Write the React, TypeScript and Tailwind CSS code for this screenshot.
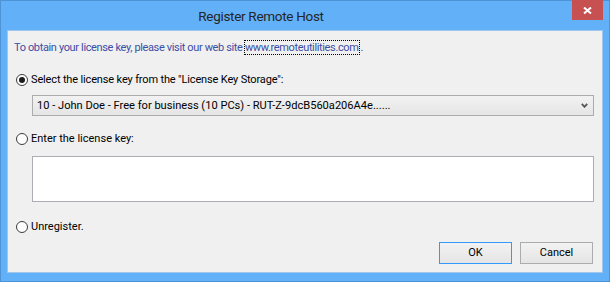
export default function App() {
  return (
    <div className="w-[610px] h-[282px] bg-[#62b0f8] border border-[#4f93d6] flex flex-col" style={{ fontFamily: 'Roboto, "Noto Sans", sans-serif' }}>
      {/* Title bar */}
      <div className="h-[29px] relative shrink-0">
        <div className="pt-[7px] pr-[88px] text-center text-[13.5px] leading-[16px] tracking-[-0.3px] text-[#262626]">Register Remote Host</div>
        <button className="absolute right-[6px] top-[-1px] w-[31px] h-[20px] bg-[#c75050] flex items-center justify-center">
          <svg width="9" height="7" viewBox="0 0 9 7">
            <path d="M1 0.5 L8 6.5 M8 0.5 L1 6.5" stroke="white" strokeWidth="2" />
          </svg>
        </button>
      </div>

      {/* Client area */}
      <div className="mx-[6px] mb-[8px] flex-1 bg-[#f0f0f0] border border-[#9fc6ee] text-[11px] leading-[16px] text-black flex flex-col">
        <div className="pl-[6px] pt-[9px] h-[25px] text-[#3c4ea5] tracking-[-0.36px] whitespace-nowrap">
          To obtain your license key, please visit our web site{' '}
          <span className="outline outline-1 outline-dotted outline-black mr-[2px]">www.remoteutilities.com</span>.
        </div>

        <div className="pl-[8px] mt-[16px] h-[16px] flex items-center gap-[3px]">
          <span className="w-[12px] h-[12px] rounded-full border border-[#3c3c3c] bg-white flex items-center justify-center">
            <span className="w-[6px] h-[6px] rounded-full bg-[#1a1a1a]" />
          </span>
          <span className="tracking-[-0.15px]">Select the license key from the "License Key Storage":</span>
        </div>

        <div className="ml-[24px] mr-[8px] mt-[7px] h-[21px] border border-[#acacac] bg-gradient-to-b from-[#f2f2f2] to-[#e5e5e5] flex items-center pl-[4px] pr-[5px]">
          <span className="flex-1 text-[11.1px]">10 - John Doe - Free for business (10 PCs) - RUT-Z-9dcB560a206A4e......</span>
          <svg width="7" height="5" viewBox="0 0 7 5">
            <path d="M0.8 0.8 L3.5 3.8 L6.2 0.8" stroke="#555" strokeWidth="1.8" fill="none" />
          </svg>
        </div>

        <div className="pl-[8px] mt-[15px] h-[16px] flex items-center gap-[3px]">
          <span className="w-[12px] h-[12px] rounded-full border border-[#3c3c3c] bg-white" />
          <span>Enter the license key:</span>
        </div>

        <div className="ml-[24px] mr-[8px] mt-[9px] h-[46px] border border-[#abadb3] bg-white" />

        <div className="pl-[8px] mt-[17px] h-[16px] flex items-center gap-[3px]">
          <span className="w-[12px] h-[12px] rounded-full border border-[#3c3c3c] bg-white" />
          <span>Unregister.</span>
        </div>

        <div className="flex justify-end gap-[8px] mr-[9px] mt-[7px]">
          <button className="w-[73px] h-[22px] border border-[#3399ff] bg-gradient-to-b from-[#f2f2f2] to-[#e5e5e5] text-[11px]">OK</button>
          <button className="w-[73px] h-[22px] border border-[#acacac] bg-gradient-to-b from-[#f2f2f2] to-[#e5e5e5] text-[11px]">Cancel</button>
        </div>
      </div>
    </div>
  )
}
